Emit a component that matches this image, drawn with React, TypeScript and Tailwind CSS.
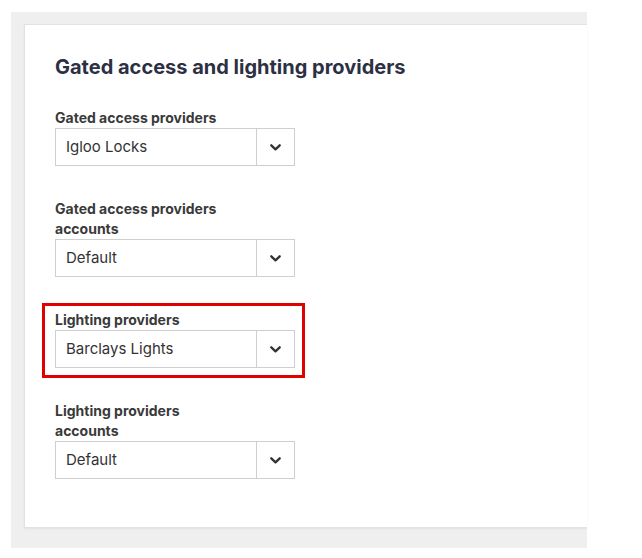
import React from "react";

function Chevron() {
  return (
    <svg width="11" height="7" viewBox="0 0 11 7" fill="none">
      <path d="M1.3 1.3 L5.5 5.3 L9.7 1.3" stroke="#333" strokeWidth="2.3" strokeLinecap="round" strokeLinejoin="round" />
    </svg>
  );
}

function Field({ label, value }: { label: string; value: string }) {
  return (
    <div className="flex flex-col">
      <div className="max-w-[170px] text-[14px] font-bold leading-[20px] text-[#3a3a3a]">{label}</div>
      <div className="flex h-[38px] w-[240px] border border-[#cfcfcf] bg-white">
        <div className="flex flex-1 items-center pl-[10px] text-[15px] text-[#333]">{value}</div>
        <div className="flex w-[38px] items-center justify-center border-l border-[#cfcfcf]">
          <Chevron />
        </div>
      </div>
    </div>
  );
}

export default function App() {
  return (
    <div className="h-[558px] w-[642px] bg-white" style={{ fontFamily: "Inter, 'Noto Sans', sans-serif" }}>
      <div className="ml-[11px] mt-[12px] h-[536px] w-[576px] bg-[#efefef] pl-[13px] pt-[12px]">
        <div className="h-[504px] border border-r-0 border-[#e2e2e2] bg-white pl-[30px] pt-[28px] shadow-[0_1px_2px_rgba(0,0,0,0.06)]">
          <h1 className="text-[20px] font-bold leading-[28px] text-[#2c3043]">
            Gated access and lighting providers
          </h1>
          <div className="mt-[27px] flex flex-col gap-[33px]">
            <Field label="Gated access providers" value="Igloo Locks" />
            <Field label="Gated access providers accounts" value="Default" />
            <div className="relative">
              <Field label="Lighting providers" value="Barclays Lights" />
              <div className="pointer-events-none absolute -left-[13px] -top-[7px] h-[75px] w-[263px] border-[3px] border-[#e00000]" />
            </div>
            <Field label="Lighting providers accounts" value="Default" />
          </div>
        </div>
      </div>
    </div>
  );
}
